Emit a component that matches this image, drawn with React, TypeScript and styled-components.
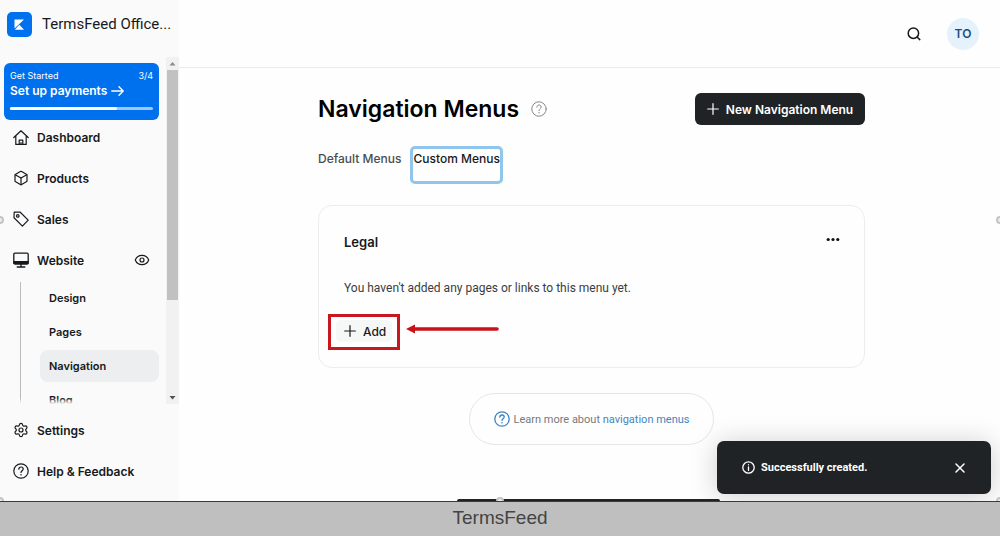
import React from "react";
import styled, { createGlobalStyle } from "styled-components";
import { Settings, Box, Eye } from "lucide-react";

const GlobalStyle = createGlobalStyle`
  * { box-sizing: border-box; }
  body {
    margin: 0;
    font-family: Inter, "Liberation Sans", sans-serif;
    color: #16191c;
    background: #fefefe;
  }
  button { font-family: inherit; border: 0; padding: 0; background: none; color: inherit; cursor: pointer; }
  a { color: inherit; text-decoration: none; }
  h1, h2, p, ul { margin: 0; padding: 0; }
  ul { list-style: none; }
  svg { display: block; flex: none; }
`;

const bodyFont = `Roboto, "Liberation Sans", sans-serif`;

const Page = styled.div`
  display: flex;
  flex-direction: column;
  height: 100vh;
`;

const Shell = styled.div`
  position: relative;
  display: flex;
  flex: 1;
  min-height: 0;
  overflow: hidden;
  border-bottom: 1px solid #3a3a3c;
`;

const Sidebar = styled.aside`
  display: flex;
  flex-direction: column;
  flex: 0 0 179px;
  min-width: 0;
  background: #fafafa;
`;

const Brand = styled.a`
  display: flex;
  align-items: center;
  gap: 10px;
  height: 57px;
  padding: 0 8px 9px 7px;
  font-family: ${bodyFont};
  font-size: 15px;
  white-space: nowrap;
`;

const ScrollArea = styled.div`
  position: relative;
  display: flex;
  flex: 1;
  min-height: 0;
  overflow: hidden;

  &::after {
    content: "";
    position: absolute;
    left: 0;
    right: 14px;
    bottom: 0;
    height: 6px;
    background: linear-gradient(rgba(250, 250, 250, 0), #fafafa);
  }
`;

const NavColumn = styled.nav`
  flex: 1;
  min-width: 0;
  padding: 6px 7px 0 4px;
`;

const ScrollTrack = styled.div`
  display: flex;
  flex-direction: column;
  align-items: center;
  width: 13px;
  background: #f1f1f1;
`;

const ScrollArrow = styled.svg`
  width: 13px;
  height: 13px;
`;

const ScrollThumb = styled.div`
  width: 11px;
  height: 230px;
  background: #c1c1c1;
`;

const TrackRest = styled.div`
  flex: 1;
`;

const StartCard = styled.a`
  display: flex;
  flex-direction: column;
  height: 57px;
  padding: 7px 6px 0;
  border-radius: 6px;
  background: #0071ee;
  color: #fff;
`;

const StartMeta = styled.div`
  display: flex;
  justify-content: space-between;
  font-size: 9px;
  line-height: 12px;
`;

const StartTitle = styled.div`
  display: flex;
  align-items: center;
  gap: 4px;
  font-size: 12px;
  line-height: 18px;
  font-weight: 600;
  white-space: nowrap;
`;

const Progress = styled.div`
  height: 3px;
  margin-top: 7px;
  border-radius: 2px;
  background: #9cc8fb;
`;

const ProgressFill = styled.div`
  width: 75%;
  height: 3px;
  border-radius: 2px;
  background: #fff;
`;

const NavList = styled.ul`
  display: flex;
  flex-direction: column;
  gap: 17px;
  padding: 5px 9px 0;
`;

const NavLink = styled.a`
  display: flex;
  align-items: center;
  gap: 8px;
  height: 24px;
  font-size: 12px;
  font-weight: 600;
  white-space: nowrap;
`;

const NavLabel = styled.span`
  flex: 1;
`;

const SubList = styled.ul`
  display: flex;
  flex-direction: column;
  gap: 2px;
  margin: 10px 0 0 16px;
  padding-left: 19px;
  border-left: 1px solid #b9bbbd;
`;

const SubLink = styled.a<{ $active?: boolean }>`
  display: flex;
  align-items: center;
  height: 32px;
  padding-left: 9px;
  border-radius: 8px;
  background: ${(p) => (p.$active ? "#eceeef" : "transparent")};
  font-size: 11px;
  font-weight: 600;
`;

const SidebarFooter = styled.nav`
  height: 97px;
  padding: 9px 4px 0;
`;

const Main = styled.main`
  display: flex;
  flex-direction: column;
  flex: 1;
  min-width: 0;
`;

const TopBar = styled.header`
  display: flex;
  align-items: center;
  justify-content: flex-end;
  gap: 26px;
  height: 68px;
  padding-right: 21px;
  border-bottom: 1px solid #ebebeb;
`;

const Avatar = styled.button`
  width: 32px;
  height: 32px;
  border-radius: 50%;
  background: #e5f2fc;
  color: #1d4f7d;
  font-size: 12px;
  font-weight: 600;
`;

const Content = styled.div`
  display: flex;
  flex-direction: column;
  padding: 25px 135px 0 139px;
`;

const TitleRow = styled.div`
  display: flex;
  align-items: center;
  gap: 12px;
  height: 32px;
`;

const Title = styled.h1`
  font-size: 23px;
  line-height: 32px;
  font-weight: 600;
  color: #000;
  white-space: nowrap;
`;

const PrimaryButton = styled.button`
  display: flex;
  align-items: center;
  justify-content: center;
  gap: 7px;
  width: 170px;
  height: 32px;
  margin-left: auto;
  border-radius: 6px;
  background: #202326;
  color: #fff;
  font-size: 12px;
  font-weight: 600;
  white-space: nowrap;
`;

const Tabs = styled.div`
  display: flex;
  gap: 9px;
  margin-top: 21px;
`;

const Tab = styled.button<{ $active?: boolean }>`
  display: flex;
  height: 38px;
  padding-top: 2px;
  border: solid ${(p) => (p.$active ? "#90c5ec" : "transparent")};
  border-width: ${(p) => (p.$active ? "3px" : "3px 0")};
  border-radius: 5px;
  font-size: 12px;
  line-height: 15px;
  font-weight: 500;
  color: ${(p) => (p.$active ? "#16191c" : "#4a4d50")};
  white-space: nowrap;
`;

const Card = styled.section`
  display: flex;
  flex-direction: column;
  height: 163px;
  margin-top: 21px;
  padding: 24px 24px 0 25px;
  border: 1px solid #ededed;
  border-radius: 14px;
`;

const CardHeader = styled.div`
  display: flex;
  align-items: center;
  justify-content: space-between;
  height: 24px;
`;

const CardTitle = styled.h2`
  font-size: 13px;
  line-height: 24px;
  font-weight: 600;
`;

const CardText = styled.p`
  margin-top: 24px;
  font-family: ${bodyFont};
  font-size: 12px;
  line-height: 20px;
  color: #3a3d40;
`;

const AddRow = styled.div`
  display: flex;
  align-items: center;
  gap: 6px;
  margin: 16px 0 0 -16px;
`;

const Highlight = styled.div`
  padding: 3px 5px 5px;
  border: 3px solid #c8171e;
`;

const AddButton = styled.button`
  display: flex;
  align-items: center;
  gap: 7px;
  width: 56px;
  height: 22px;
  padding-left: 8px;
  border-radius: 5px;
  background: #f6f7f7;
  font-size: 12px;
  font-weight: 500;
`;

const HelpPill = styled.div`
  display: flex;
  align-items: center;
  justify-content: center;
  gap: 4px;
  align-self: center;
  width: 245px;
  height: 52px;
  margin-top: 25px;
  border: 1px solid #e6e6e6;
  border-radius: 26px;
  font-family: ${bodyFont};
  font-size: 11px;
  color: #77797c;
  white-space: nowrap;

  a { color: #4386bd; }
`;

const Toast = styled.div`
  position: absolute;
  right: 9px;
  bottom: 7px;
  display: flex;
  align-items: center;
  gap: 6px;
  width: 274px;
  height: 53px;
  padding: 0 25px;
  border-radius: 7px;
  background: #202326;
  color: #fff;
  font-family: ${bodyFont};
  font-size: 11px;
  font-weight: 700;
  box-shadow: 0 2px 28px rgba(0, 0, 0, 0.2);

  button { margin-left: auto; }
`;

const HiddenPanel = styled.div`
  position: absolute;
  left: 457px;
  right: 280px;
  bottom: 0;
  height: 2px;
  border-radius: 3px 3px 0 0;
  background: #202326;
`;

const Handle = styled.span<{ $x: string; $y: string }>`
  position: absolute;
  left: ${(p) => p.$x};
  top: ${(p) => p.$y};
  width: 8px;
  height: 8px;
  margin: -4px;
  border: 2px solid #c4c4c6;
  border-radius: 50%;
  background: #ededed;
`;

const MutedIcon = styled.span`
  color: #85878a;
`;

const BlueIcon = styled.span`
  color: #3b84c4;
`;

const Caption = styled.footer`
  display: flex;
  align-items: center;
  justify-content: center;
  height: 34px;
  padding-bottom: 2px;
  background: #bfbfbf;
  color: #444;
  font-family: "Liberation Sans", Arial, sans-serif;
  font-size: 19px;
`;

const stroke = { fill: "none", stroke: "currentColor", strokeLinecap: "round", strokeLinejoin: "round" } as const;

const HomeIcon = () => (
  <svg width="16" height="16" viewBox="0 0 16 16" {...stroke} strokeWidth="1.2">
    <path d="M.8 8.5 8 1.8 15.2 8.5M2.8 7v8.4h10.4V7M6.2 15.2v-4h3.6v4M8 13.5v1.5" />
  </svg>
);
const TagIcon = () => (
  <svg width="16" height="16" viewBox="0 0 16 16" {...stroke} strokeWidth="1.2">
    <path d="M1.2 1.2 7 1l8.2 8.2-5.8 5.9L1 6.8z" />
    <circle cx="4.8" cy="4.9" r="1.3" />
  </svg>
);
const MonitorIcon = () => (
  <svg width="16" height="16" viewBox="0 0 16 16" {...stroke} strokeWidth="1.3">
    <rect x=".8" y="1.2" width="14.4" height="10.8" rx="1.2" />
    <path d="M1 9.6h14v1.8H1z" fill="currentColor" />
    <path d="M8 12v2.8M4.2 15h7.6" />
  </svg>
);
const HelpIcon = ({ width = 1.2 }: { width?: number }) => (
  <svg width="16" height="16" viewBox="0 0 16 16" {...stroke} strokeWidth={width}>
    <circle cx="8" cy="8" r="7.2" />
    <path d="M5.8 6.2c.1-1.4 1-2.2 2.2-2.2 1.3 0 2.2.8 2.2 2C10.2 7.7 8 7.7 8 9.5" />
    <path d="M8 11.7v.1" strokeWidth={width + 0.3} />
  </svg>
);
const PlusIcon = () => (
  <svg width="12" height="12" viewBox="0 0 12 12" {...stroke} strokeWidth="1.2">
    <path d="M6 .7v10.6M.7 6h10.6" />
  </svg>
);
const SearchIcon = () => (
  <svg width="14" height="14" viewBox="0 0 14 14" {...stroke} strokeWidth="1.5">
    <circle cx="6.4" cy="6.2" r="5.2" />
    <path d="m10.3 10.2 2.5 2.4" />
  </svg>
);

const mainLinks = [
  { label: "Dashboard", icon: <HomeIcon /> },
  { label: "Products", icon: <Box size={16} strokeWidth={1.8} /> },
  { label: "Sales", icon: <TagIcon /> },
  { label: "Website", icon: <MonitorIcon />, extra: <Eye size={16} strokeWidth={1.8} /> },
];
const footerLinks = [
  { label: "Settings", icon: <Settings size={16} strokeWidth={1.8} /> },
  { label: "Help & Feedback", icon: <HelpIcon /> },
];
const handles = [
  ["0%", "220px"],
  ["100%", "220px"],
  ["0%", "100%"],
  ["50%", "100%"],
  ["100%", "100%"],
];

export default function App() {
  return (
    <Page>
      <GlobalStyle />
      <Shell>
        <Sidebar>
          <Brand href="#">
            <svg width="25" height="25" viewBox="0 0 25 25">
              <rect width="25" height="25" rx="5" fill="#0071ee" />
              <path d="M7.5 7.5h9.5l-9.5 9z" fill="#fff" />
              <path d="M12.3 12.8 17 17.8H7.8z" fill="#fff" />
            </svg>
            TermsFeed Office...
          </Brand>
          <ScrollArea>
            <NavColumn>
              <StartCard href="#">
                <StartMeta>
                  <span>Get Started</span>
                  <span>3/4</span>
                </StartMeta>
                <StartTitle>
                  Set up payments
                  <svg width="13" height="11" viewBox="0 0 13 11" {...stroke} strokeWidth="1.4">
                    <path d="M.8 5h11.2M8 .8l4.200 4.200L8 9.200" />
                  </svg>
                </StartTitle>
                <Progress>
                  <ProgressFill />
                </Progress>
              </StartCard>
              <NavList>
                {mainLinks.map((l) => (
                  <li key={l.label}>
                    <NavLink href="#">
                      {l.icon}
                      <NavLabel>{l.label}</NavLabel>
                      {l.extra}
                    </NavLink>
                  </li>
                ))}
              </NavList>
              <SubList>
                {["Design", "Pages", "Navigation", "Blog"].map((s) => (
                  <li key={s}>
                    <SubLink href="#" $active={s === "Navigation"}>
                      {s}
                    </SubLink>
                  </li>
                ))}
              </SubList>
            </NavColumn>
            <ScrollTrack>
              <ScrollArrow viewBox="0 0 13 13">
                <path d="M3.5 8.5h6l-3-3.500z" fill="#8a8a8a" />
              </ScrollArrow>
              <ScrollThumb />
              <TrackRest />
              <ScrollArrow viewBox="0 0 13 13">
                <path d="M3.5 5h6l-3 3.500z" fill="#505050" />
              </ScrollArrow>
            </ScrollTrack>
          </ScrollArea>
          <SidebarFooter>
            <NavList>
              {footerLinks.map((l) => (
                <li key={l.label}>
                  <NavLink href="#">
                    {l.icon}
                    {l.label}
                  </NavLink>
                </li>
              ))}
            </NavList>
          </SidebarFooter>
        </Sidebar>
        <Main>
          <TopBar>
            <button aria-label="Search">
              <SearchIcon />
            </button>
            <Avatar>TO</Avatar>
          </TopBar>
          <Content>
            <TitleRow>
              <Title>Navigation Menus</Title>
              <MutedIcon>
                <HelpIcon width={1} />
              </MutedIcon>
              <PrimaryButton>
                <PlusIcon />
                New Navigation Menu
              </PrimaryButton>
            </TitleRow>
            <Tabs>
              <Tab>Default Menus</Tab>
              <Tab $active>Custom Menus</Tab>
            </Tabs>
            <Card>
              <CardHeader>
                <CardTitle>Legal</CardTitle>
                <button aria-label="More options">
                  <svg width="14" height="14" viewBox="0 0 14 14" fill="#111">
                    <circle cx="2.2" cy="4.5" r="1.6" />
                    <circle cx="7" cy="4.5" r="1.6" />
                    <circle cx="11.8" cy="4.5" r="1.6" />
                  </svg>
                </button>
              </CardHeader>
              <CardText>You haven't added any pages or links to this menu yet.</CardText>
              <AddRow>
                <Highlight>
                  <AddButton>
                    <PlusIcon />
                    Add
                  </AddButton>
                </Highlight>
                <svg width="93" height="16" viewBox="0 0 93 16">
                  <path d="M8 5h83" stroke="#cc1219" strokeWidth="3.6" strokeLinecap="round" />
                  <path d="M0 5 9 .5v9z" fill="#cc1219" />
                </svg>
              </AddRow>
            </Card>
            <HelpPill>
              <BlueIcon>
                <HelpIcon width={1.3} />
              </BlueIcon>
              <span>
                Learn more about <a href="#">navigation menus</a>
              </span>
            </HelpPill>
          </Content>
        </Main>
        <HiddenPanel />
        <Toast role="status">
          <svg width="13" height="13" viewBox="0 0 13 13" {...stroke} strokeWidth="1.3">
            <circle cx="6.5" cy="6.5" r="5.7" />
            <path d="M6.5 6v3.4M6.5 3.7v.1" />
          </svg>
          Successfully created.
          <button aria-label="Close">
            <svg width="12" height="12" viewBox="0 0 12 12" {...stroke} strokeWidth="1.5">
              <path d="m2 2 8 8M10 2l-8 8" />
            </svg>
          </button>
        </Toast>
        {handles.map(([x, y]) => (
          <Handle key={x + y} $x={x} $y={y} />
        ))}
      </Shell>
      <Caption>TermsFeed</Caption>
    </Page>
  );
}
